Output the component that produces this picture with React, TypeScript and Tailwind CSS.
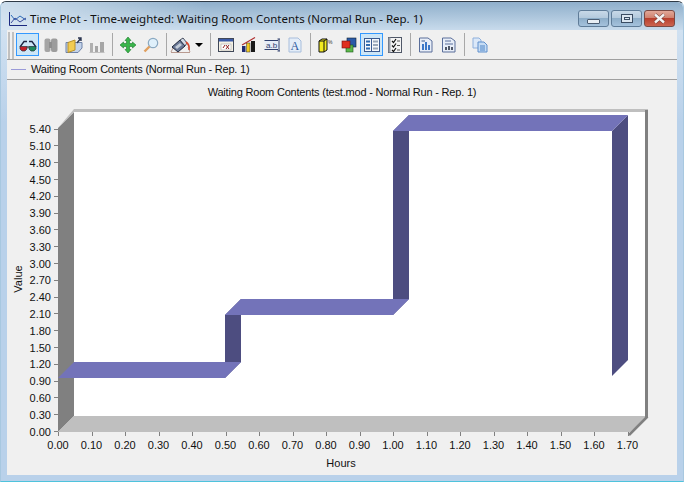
import type { ReactNode } from "react";

const xLabels = Array.from({ length: 18 }, (_, i) => (i / 10).toFixed(2));
const yLabels = Array.from({ length: 19 }, (_, i) => (i * 0.3).toFixed(2));

function Icon({ children, w = 16 }: { children: ReactNode; w?: number }) {
  return (
    <svg width={w} height="16" viewBox={`0 0 ${w} 16`}>
      {children}
    </svg>
  );
}

function ToolButton({ children, active }: { children: ReactNode; active?: boolean }) {
  return (
    <div
      className={`flex h-[23px] w-[23px] items-center justify-center ${
        active ? "border border-[#3399ff] bg-[#cde6f7]" : ""
      }`}
    >
      {children}
    </div>
  );
}

function Sep() {
  return (
    <div className="flex h-[23px] w-[8px] justify-center pl-[1px]">
      <div className="h-full w-px bg-[#a8a8a8]" />
    </div>
  );
}

function WinButton({ kind }: { kind: "min" | "max" | "close" }) {
  if (kind === "close") {
    return (
      <div className="flex h-[17px] w-[31px] items-center justify-center rounded-[3px] border border-[#7a4a44] bg-[linear-gradient(to_bottom,#e2a898_0%,#d08270_45%,#b8402e_50%,#cc6450_100%)]">
        <svg width="15" height="11" viewBox="0 0 15 11">
          <path d="M3 1.5 L12 9.5 M12 1.5 L3 9.5" stroke="#6a3a34" strokeWidth="3.6" />
          <path d="M3 1.5 L12 9.5 M12 1.5 L3 9.5" stroke="#f4f4f4" strokeWidth="2.4" />
        </svg>
      </div>
    );
  }
  return (
    <div className="flex h-[17px] w-[31px] items-center justify-center rounded-[3px] border border-[#5f7c98] bg-[linear-gradient(to_bottom,#c8d9e8_0%,#b4cadd_45%,#8eaec9_50%,#a5c2dc_100%)]">
      {kind === "min" ? (
        <div className="mt-[5px] h-[5px] w-[13px] rounded-[1px] border border-[#4a5c72] bg-[#e8eef4]" />
      ) : (
        <div className="flex h-[9px] w-[12px] items-center justify-center border border-[#3a4c62] bg-[#dbe6f0]">
          <div className="h-[3px] w-[6px] border border-[#3a4c62]" />
        </div>
      )}
    </div>
  );
}

function Toolbar() {
  return (
    <div className="flex h-[29px] items-center pl-[1px] pr-1">
      <div className="mr-[2px] flex h-[27px] w-[6px] justify-between self-end">
        <div className="w-[2px] border-x border-[#c0c0c0] bg-white" />
        <div className="w-[2px] border-x border-[#c0c0c0] bg-white" />
      </div>
      <ToolButton active>
        <Icon w={18}>
          <path d="M1 10 L5 4.5 L8 4.5 M17 10 L13 4.5 L10 4.5" fill="none" stroke="#1c2440" strokeWidth="1.3" />
          <path d="M1 9.5 L8 9.5 L8 12 L6 14 L3 14 L1 12 Z" fill="#c2202a" stroke="#30303a" strokeWidth="0.7" />
          <path d="M10 9.5 L17 9.5 L17 12 L15 14 L12 14 L10 12 Z" fill="#1f8a5c" stroke="#20303a" strokeWidth="0.7" />
          <path d="M8 10 L10 10" stroke="#222" strokeWidth="1.2" />
        </Icon>
      </ToolButton>
      <ToolButton>
        <Icon>
          <rect x="1.5" y="1.5" width="6" height="13.5" rx="2" fill="#a4a4a4" />
          <rect x="8" y="1.5" width="6.5" height="13.5" rx="2" fill="#9c9c9c" />
          <rect x="6" y="5" width="3" height="6" fill="#8e8e8e" />
        </Icon>
      </ToolButton>
      <ToolButton>
        <Icon w={18}>
          <path d="M1 5.5 L1 15.5 L13 15.5 L17 11 L17 5.5 Z" fill="#c3d3ea" stroke="#6f83a8" />
          <path d="M3 5.5 L10 3 L10 13 L3 15.5 Z" fill="#f2cc52" stroke="#b8912a" />
          <path d="M12 6 L16 1 M13 1 L16 1 L16 4" fill="none" stroke="#2a3550" strokeWidth="1.4" />
        </Icon>
      </ToolButton>
      <ToolButton>
        <Icon>
          <rect x="1" y="6" width="3" height="9" fill="#b0b0b0" />
          <rect x="6" y="9" width="3" height="6" fill="#a6a6a6" />
          <rect x="11" y="5" width="4" height="10" fill="#a6a6a6" />
          <path d="M0.5 15.5 H15.5" stroke="#c0c0c0" />
        </Icon>
      </ToolButton>
      <Sep />
      <ToolButton>
        <Icon>
          <path
            d="M8 0 L11 3.5 L9.5 3.5 L9.5 6.5 L12.5 6.5 L12.5 5 L16 8 L12.5 11 L12.5 9.5 L9.5 9.5 L9.5 12.5 L11 12.5 L8 16 L5 12.5 L6.5 12.5 L6.5 9.5 L3.5 9.5 L3.5 11 L0 8 L3.5 5 L3.5 6.5 L6.5 6.5 L6.5 3.5 L5 3.5 Z"
            fill="#39b54a"
            stroke="#1c7a2c"
            strokeWidth="0.6"
          />
        </Icon>
      </ToolButton>
      <ToolButton>
        <Icon>
          <circle cx="10" cy="6" r="4.7" fill="#dff0fb" stroke="#8aa9c2" strokeWidth="1.2" />
          <path d="M6.5 9.5 L1.5 14.5" stroke="#e0a060" strokeWidth="2.4" />
        </Icon>
      </ToolButton>
      <Sep />
      <div className="flex h-[23px] w-[21px] items-center justify-center">
        <Icon w={21}>
          <path d="M1 15.5 L20 15.5" stroke="#b89a90" />
          <path d="M1 15 L4 9 M20 15 L18 10" stroke="#b89a90" />
          <path d="M2 10 L10 3 L15 9 L8 15 Z" fill="#6a7896" stroke="#20283c" />
          <path d="M10 3 L13 1 L17 6 L15 9 Z" fill="#d5dbe6" stroke="#20283c" strokeWidth="0.8" />
          <path d="M5 10 L10 6 L12 8 L7 12 Z" fill="#c4ccd8" />
          <path d="M16 5 Q20 8 19 13" fill="none" stroke="#d8482e" strokeWidth="1.6" />
        </Icon>
      </div>
      <div className="flex h-[23px] w-[15px] items-center justify-center">
        <div className="h-0 w-0 border-x-[4px] border-t-[4px] border-x-transparent border-t-black" />
      </div>
      <Sep />
      <ToolButton>
        <Icon>
          <rect x="0.5" y="1.5" width="15" height="13" fill="#f4f0e4" stroke="#404858" />
          <rect x="1" y="2" width="14" height="2.5" fill="#3a5aa8" />
          <rect x="3" y="7" width="10" height="6" fill="#fff" stroke="#999" strokeWidth="0.5" />
          <path d="M5 11 L7 8 M8 8 L11 12 M11 8 L8 12" stroke="#902020" strokeWidth="1" />
        </Icon>
      </ToolButton>
      <ToolButton>
        <Icon>
          <rect x="1" y="9" width="3.5" height="6" fill="#202a70" />
          <rect x="5.5" y="6" width="3.5" height="9" fill="#f0c820" stroke="#303030" strokeWidth="0.5" />
          <rect x="10" y="4" width="4" height="11" fill="#181818" />
          <path d="M1 8 L8 4 L14 0.5" stroke="#b03030" strokeWidth="1.2" fill="none" />
        </Icon>
      </ToolButton>
      <ToolButton>
        <Icon>
          <rect x="0.5" y="3.5" width="14" height="9" fill="#e6ecf6" />
          <path d="M0.5 3.5 H14 M0.5 12.5 H14" stroke="#30406e" />
          <path d="M15 2 V14 M13.5 2 H16 M13.5 14 H16" stroke="#30406e" fill="none" />
          <text x="2" y="11" fontSize="8" fontFamily="Liberation Sans, sans-serif" fill="#30406e">
            a.b
          </text>
        </Icon>
      </ToolButton>
      <ToolButton>
        <Icon>
          <path d="M2 1 L11 1 L14 4 L14 15 L2 15 Z" fill="#e4edf8" stroke="#a8bedc" />
          <text x="3.5" y="13" fontSize="12" fontFamily="Liberation Serif, serif" fill="#2f5b9e">
            A
          </text>
        </Icon>
      </ToolButton>
      <Sep />
      <ToolButton>
        <Icon>
          <path d="M1 4 L4 2 L9 2 L9 13 L6 15 L1 15 Z" fill="#f2ea20" stroke="#111" />
          <path d="M6 4 L6 15 M6 4 L9 2 M1 4 L6 4" stroke="#111" />
          <text x="10" y="7" fontSize="5" fontFamily="Liberation Sans, sans-serif" fill="#333">
            %
          </text>
        </Icon>
      </ToolButton>
      <ToolButton>
        <Icon>
          <rect x="6" y="1" width="9" height="9" fill="#2a5aa8" stroke="#123" strokeWidth="0.6" />
          <rect x="5" y="8" width="7" height="7" fill="#5cb84a" stroke="#1c5a1c" strokeWidth="0.6" />
          <rect x="1" y="4" width="8" height="7" fill="#e03020" stroke="#701010" strokeWidth="0.6" />
        </Icon>
      </ToolButton>
      <ToolButton active>
        <Icon>
          <rect x="0.5" y="1.5" width="15" height="13" fill="#f6f8fb" stroke="#3a5a90" />
          <path d="M7.5 2 V14" stroke="#3a5a90" />
          <path d="M2 4.5 H6 M2 8 H6 M2 11.5 H6" stroke="#2f6bb0" strokeWidth="2" />
          <path d="M9 4.5 H14 M9 8 H14 M9 11.5 H14" stroke="#9aa8ba" strokeWidth="2" />
        </Icon>
      </ToolButton>
      <ToolButton>
        <Icon>
          <rect x="1.5" y="0.5" width="13" height="15" fill="#f4f4f4" stroke="#505868" />
          <rect x="1.5" y="0.5" width="2" height="15" fill="#9aa0aa" />
          <path
            d="M5 4 L6.5 5.5 L9 2 M5 8.5 L6.5 10 L9 6.5 M5 13 L6.5 14.5 L9 11"
            fill="none"
            stroke="#111"
            strokeWidth="1.2"
          />
          <path d="M10 4 H13 M10 8.5 H13 M10 13 H13" stroke="#555" />
        </Icon>
      </ToolButton>
      <Sep />
      <ToolButton>
        <Icon>
          <path d="M1.5 1 L10 1 L14 4 L14 15 L1.5 15 Z" fill="#e8eef8" stroke="#5a6e9a" />
          <path d="M3.5 4 H7" stroke="#3a5a90" />
          <rect x="4" y="7" width="2" height="6" fill="#3c78c8" />
          <rect x="7" y="5" width="2" height="8" fill="#3c78c8" />
          <rect x="10" y="8" width="2" height="5" fill="#3c78c8" />
        </Icon>
      </ToolButton>
      <ToolButton>
        <Icon>
          <path d="M1.5 1 L10 1 L14 4 L14 15 L1.5 15 Z" fill="#e8eef8" stroke="#5a6e9a" />
          <path d="M4 4 H10 M4 7 H12" stroke="#5a6e9a" />
          <rect x="4" y="10" width="2" height="3" fill="#505868" />
          <rect x="7" y="9" width="2" height="4" fill="#505868" />
          <rect x="10" y="10" width="2" height="3" fill="#505868" />
        </Icon>
      </ToolButton>
      <Sep />
      <ToolButton>
        <Icon>
          <path d="M1 1 L7 1 L9 3 L9 11 L1 11 Z" fill="#dbe8f8" stroke="#8fb0dc" />
          <path d="M6 5 L12 5 L15 8 L15 15 L6 15 Z" fill="#c6dcf4" stroke="#5f8fcc" />
          <path d="M8 9 H13 M8 11 H13 M8 13 H13" stroke="#4f86c8" />
        </Icon>
      </ToolButton>
    </div>
  );
}

function Chart() {
  return (
    <svg width="670" height="395" viewBox="7 80 670 395" className="block">
      <rect x="7" y="80" width="670" height="395" fill="#f0f0f0" />
      <text
        x="342"
        y="96"
        textAnchor="middle"
        fontSize="11"
        letterSpacing="-0.19"
        fontFamily="Liberation Sans, sans-serif"
        fill="#111"
      >
        Waiting Room Contents (test.mod - Normal Run - Rep. 1)
      </text>
      {/* walls */}
      <polygon points="74,112 645,112 645,416 74,416" fill="#ffffff" />
      <polygon points="58,128 74,112 74,416 58,432" fill="#808080" />
      <polygon points="58,432 74,416 648,416 630,432" fill="#bfbfbf" />
      <polygon points="58,128 74,109 648,109 648,112 74,112" fill="#bfbfbf" />
      <rect x="645" y="110" width="3" height="307" fill="#808080" />
      <path d="M647.5 416.5 L629 435" stroke="#808080" strokeWidth="2.5" />
      {/* steps */}
      <polygon points="225,378 241,362 241,299 225,315" fill="#4d4d80" />
      <polygon points="393,315 409,299 409,115 393,131" fill="#4d4d80" />
      <polygon points="612,131 628,115 628,360 612,376" fill="#4d4d80" />
      <polygon points="58,378 74,362 241,362 225,378" fill="#7373b9" />
      <polygon points="225,315 241,299 409,299 393,315" fill="#7373b9" />
      <polygon points="393,131 409,115 628,115 612,131" fill="#7373b9" />
      {/* axes */}
      {xLabels.map((label, i) => {
        const x = 58 + i * 33.5;
        return (
          <g key={label}>
            <path d={`M${Math.round(x) + 0.5} 432 V436`} stroke="#808080" />
            <text x={x} y="449" textAnchor="middle" fontSize="11" fontFamily="Liberation Sans, sans-serif" fill="#111">
              {label}
            </text>
          </g>
        );
      })}
      {yLabels.map((label, i) => {
        const y = 432 - i * 16.8;
        return (
          <g key={label}>
            <path d={`M54 ${Math.round(y) - 0.5} H58`} stroke="#808080" />
            <text x="51" y={y + 3.5} textAnchor="end" fontSize="11" fontFamily="Liberation Sans, sans-serif" fill="#111">
              {label}
            </text>
          </g>
        );
      })}
      <text x="341" y="467" textAnchor="middle" fontSize="11" fontFamily="Liberation Sans, sans-serif" fill="#111">
        Hours
      </text>
      <text
        x="22"
        y="279"
        textAnchor="middle"
        fontSize="11"
        fontFamily="Liberation Sans, sans-serif"
        fill="#111"
        transform="rotate(-90 22 279)"
      >
        Value
      </text>
    </svg>
  );
}

export default function App() {
  return (
    <div className="h-[482px] w-[684px] overflow-hidden bg-white pt-px font-['Liberation_Sans',sans-serif]">
      <div className="flex h-full flex-col rounded-t-[6px] border-x border-t border-x-[#a8c8e0] border-t-[#2e3a46] border-b border-b-[#4fc3dc] bg-[linear-gradient(to_bottom,#d8e6f3_0%,#b9d1ea_25%)]">
        <div className="flex h-[28px] shrink-0 items-center rounded-t-[6px] bg-[linear-gradient(to_right,#dce9f4cc,#dce9f400_30%),linear-gradient(to_bottom,#8fafcb,#c8dbec)] pl-[8px] pr-[8px] pt-[5px]">
          <svg width="18" height="14" viewBox="0 0 18 14" className="mr-[3px]">
            <path d="M0.5 0 V13.5 H18" fill="none" stroke="#1c2a80" />
            <path d="M2 3 L6 8 L11 4 L17 8" fill="none" stroke="#2e6bb8" />
            <path d="M2 11 L6 6 L11 10 L17 6" fill="none" stroke="#3a4a9a" />
          </svg>
          <span className="flex-1 font-['Noto_Sans',sans-serif] text-[11.5px] text-[#111]">
            Time Plot - Time-weighted: Waiting Room Contents (Normal Run - Rep. 1)
          </span>
          <div className="flex gap-[2px]">
            <WinButton kind="min" />
            <WinButton kind="max" />
            <WinButton kind="close" />
          </div>
        </div>
        <div className="mx-[6px] flex flex-col bg-[#f0f0f0] text-[11px] text-[#111]">
          <Toolbar />
          <div className="flex h-[21px] items-center gap-[5px] border-y border-[#a0a0a0] pl-[4px]">
            <div className="h-px w-[15px] bg-[#9a9ad8]" />
            <span className="tracking-[-0.2px]">Waiting Room Contents (Normal Run - Rep. 1)</span>
          </div>
          <Chart />
        </div>
      </div>
    </div>
  );
}
